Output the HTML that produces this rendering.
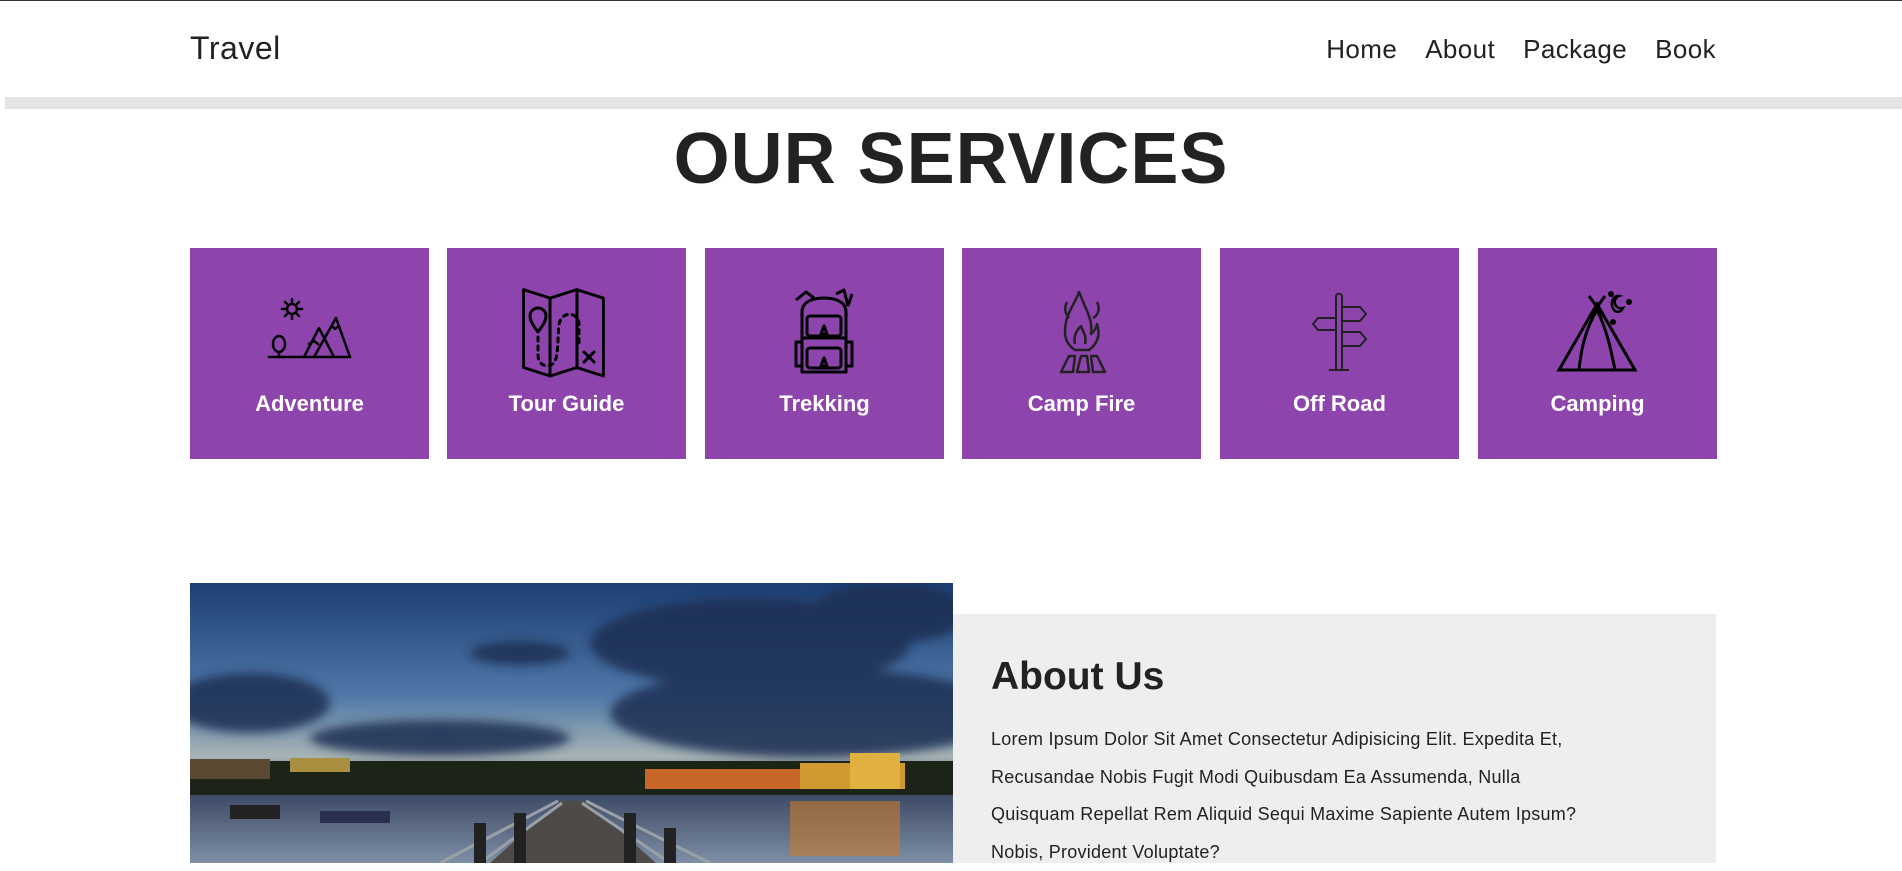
<!DOCTYPE html>
<html><head><meta charset="utf-8">
<style>
*{margin:0;padding:0;box-sizing:border-box}
body{width:1902px;height:863px;overflow:hidden;background:#fff;font-family:"Liberation Sans",sans-serif;position:relative;color:#222}
.top{position:absolute;left:0;top:0;width:1902px;height:1px;background:#333}
.logo{position:absolute;left:190px;top:30px;font-size:32px;color:#222;letter-spacing:0.5px}
.nav{position:absolute;right:186px;top:34px;font-size:26px;color:#222;letter-spacing:0.4px}
.nav span{margin-left:28px}
.bar{position:absolute;left:5px;top:97px;width:1897px;height:12px;background:#e4e4e4}
h1{position:absolute;left:0;width:1902px;text-align:center;top:118px;font-size:72px;font-weight:bold;color:#222;letter-spacing:1px}
.card{position:absolute;top:248px;width:239px;height:211px;background:#8e44ad}
.card svg{position:absolute;left:69px;top:34px}
.card b{position:absolute;left:0;width:100%;top:143px;text-align:center;color:#fff;font-size:22px}
.img{position:absolute;left:190px;top:583px;width:763px;height:280px}
.gray{position:absolute;left:953px;top:614px;width:763px;height:249px;background:#eee}
h2{position:absolute;left:991px;top:655px;font-size:39px;font-weight:bold;color:#222}
p{position:absolute;left:991px;top:721px;width:720px;font-size:18px;line-height:37.5px;color:#222;letter-spacing:0.25px}
</style></head><body>
<div class="top"></div>
<div class="logo">Travel</div>
<div class="nav"><span>Home</span><span>About</span><span>Package</span><span>Book</span></div>
<div class="bar"></div>
<h1>OUR SERVICES</h1>

<div class="card" style="left:190px"><svg width="100" height="100" viewBox="0 0 100 100" fill="none" stroke="#000" stroke-width="2.5" stroke-linecap="round" stroke-linejoin="round">
<circle cx="33" cy="27" r="5"/><path d="M33 17v3M33 34v3M23 27h3M40 27h3M26 20l2 2M38 32l2 2M26 34l2-2M38 22l2-2"/>
<path d="M10 75h81M45 75l15-29 15 29M55 75l22-39 14 39M50 62l5-3 4 3M73 44l3 3 4-3"/>
<ellipse cx="20" cy="62" rx="6" ry="8"/><path d="M20 70v5"/></svg><b>Adventure</b></div>

<div class="card" style="left:447px"><svg width="100" height="100" viewBox="0 0 100 100" fill="none" stroke="#000" stroke-width="3" stroke-linecap="round" stroke-linejoin="round">
<path d="M8 8l28 9 28-9 28 9v82l-28-9-28 9-28-9z" transform="scale(0.95)"/><path d="M34 16v78M61 8v78"/>
<path d="M22 50c-6-8-8-12-8-16a8 8 0 0 1 16 0c0 4-2 8-8 16z"/>
<path d="M22 55v18c0 12 12 12 13 10c8-4 6-20 8-40c2-14 18-14 20-2v20" stroke-dasharray="4 5"/>
<path d="M68 70l10 10M78 70l-10 10"/></svg><b>Tour Guide</b></div>

<div class="card" style="left:705px"><svg width="100" height="100" viewBox="0 0 100 100" fill="none" stroke="#000" stroke-width="3" stroke-linejoin="round">
<path d="M28 30c0-10 10-14 22-14s22 4 22 14v60H28z"/><path d="M22 18l10-8 8 6M62 12l8-4 4 16M74 24l4-12"/>
<rect x="33" y="34" width="34" height="20" rx="3"/><path d="M50 44l-3 8h6z"/>
<path d="M28 56h44"/><rect x="33" y="66" width="34" height="20" rx="3"/><path d="M50 76l-3 8h6z"/>
<path d="M28 60h-6v24h6M72 60h6v24h-6"/></svg><b>Trekking</b></div>

<div class="card" style="left:962px"><svg width="100" height="100" viewBox="0 0 100 100" fill="none" stroke="#222" stroke-width="2.5" stroke-linejoin="round">
<path d="M48 10c-6 16-14 22-14 40c0 8 4 14 10 18h14c8-6 12-14 8-26c-2 8-6 10-6 10c2-14-4-22-12-42z"/>
<path d="M36 20c-4 8 0 14 2 16M66 20c4 8 0 14-4 16"/><path d="M44 62c-2-8 2-14 6-18c2 6 6 10 4 18"/>
<path d="M30 90l8-16h6l-2 16zM46 90l4-16h6l2 16zM62 90l-2-16h6l8 16z"/></svg><b>Camp Fire</b></div>

<div class="card" style="left:1220px"><svg width="100" height="100" viewBox="0 0 100 100" fill="none" stroke="#222" stroke-width="2">
<path d="M47 88V14c0-3 6-3 6 0v74M40 88h20M53 25h18l6 7-6 7H53M47 36H29l-5 6 5 6h18M53 50h18l6 7-6 7H53"/></svg><b>Off Road</b></div>

<div class="card" style="left:1478px"><svg width="100" height="100" viewBox="0 0 100 100" fill="none" stroke="#000" stroke-width="3">
<path d="M12 88L50 22 88 88zM42 14l16 22M58 14L42 36M50 28c-12 20-16 40-18 60M50 28c10 20 14 40 18 60"/>
<path d="M72 14a6 8 0 1 0 4 12a6 6 0 0 1-4-12z" stroke-width="2.5"/><circle cx="64" cy="12" r="1.5" fill="#000"/><circle cx="82" cy="20" r="1.5" fill="#000"/><circle cx="66" cy="40" r="1.5" fill="#000"/></svg><b>Camping</b></div>

<svg class="img" viewBox="0 0 763 280" preserveAspectRatio="none">
<defs>
<linearGradient id="sky" x1="0" y1="0" x2="0" y2="1"><stop offset="0" stop-color="#1d3f74"/><stop offset="0.4" stop-color="#4f78a8"/><stop offset="0.62" stop-color="#a7b4b4"/><stop offset="0.7" stop-color="#5a6480"/></linearGradient>
<linearGradient id="wat" x1="0" y1="0" x2="0" y2="1"><stop offset="0" stop-color="#3e4a66"/><stop offset="1" stop-color="#7e8ea6"/></linearGradient>
<filter id="bl"><feGaussianBlur stdDeviation="5"/></filter>
</defs>
<rect width="763" height="280" fill="url(#sky)"/>
<g fill="#1e2d52" opacity="0.85" filter="url(#bl)">
<ellipse cx="560" cy="60" rx="160" ry="45"/><ellipse cx="620" cy="130" rx="200" ry="45"/><ellipse cx="330" cy="70" rx="50" ry="12"/>
<ellipse cx="60" cy="120" rx="80" ry="30"/><ellipse cx="250" cy="155" rx="130" ry="18"/><ellipse cx="700" cy="30" rx="80" ry="30"/>
</g>
<rect x="0" y="178" width="763" height="38" fill="#1c2418"/>
<rect x="0" y="176" width="80" height="20" fill="#5a4a34"/>
<rect x="100" y="175" width="60" height="14" fill="#a89040"/>
<rect x="455" y="186" width="170" height="20" fill="#c8662a"/>
<rect x="610" y="180" width="105" height="26" fill="#d09a30"/>
<rect x="660" y="170" width="50" height="36" fill="#e0b040"/>
<rect x="0" y="212" width="763" height="68" fill="url(#wat)"/>
<rect x="600" y="218" width="110" height="55" fill="#c87a2a" opacity="0.6"/>
<rect x="40" y="222" width="50" height="14" fill="#222"/><rect x="130" y="228" width="70" height="12" fill="#2a2f50"/>
<path d="M300 280L370 218h26l70 62z" fill="#4e4a48"/>
<path d="M250 280L368 218M290 280L372 220M520 280L396 218M480 280L392 220" stroke="#9aa0a8" stroke-width="3"/>
<path d="M290 240v40M330 230v50M440 230v50M480 245v35" stroke="#222" stroke-width="12"/>
</svg>
<div class="gray"></div>
<h2>About Us</h2>
<p>Lorem Ipsum Dolor Sit Amet Consectetur Adipisicing Elit. Expedita Et,<br>Recusandae Nobis Fugit Modi Quibusdam Ea Assumenda, Nulla<br>Quisquam Repellat Rem Aliquid Sequi Maxime Sapiente Autem Ipsum?<br>Nobis, Provident Voluptate?</p>
</body></html>
